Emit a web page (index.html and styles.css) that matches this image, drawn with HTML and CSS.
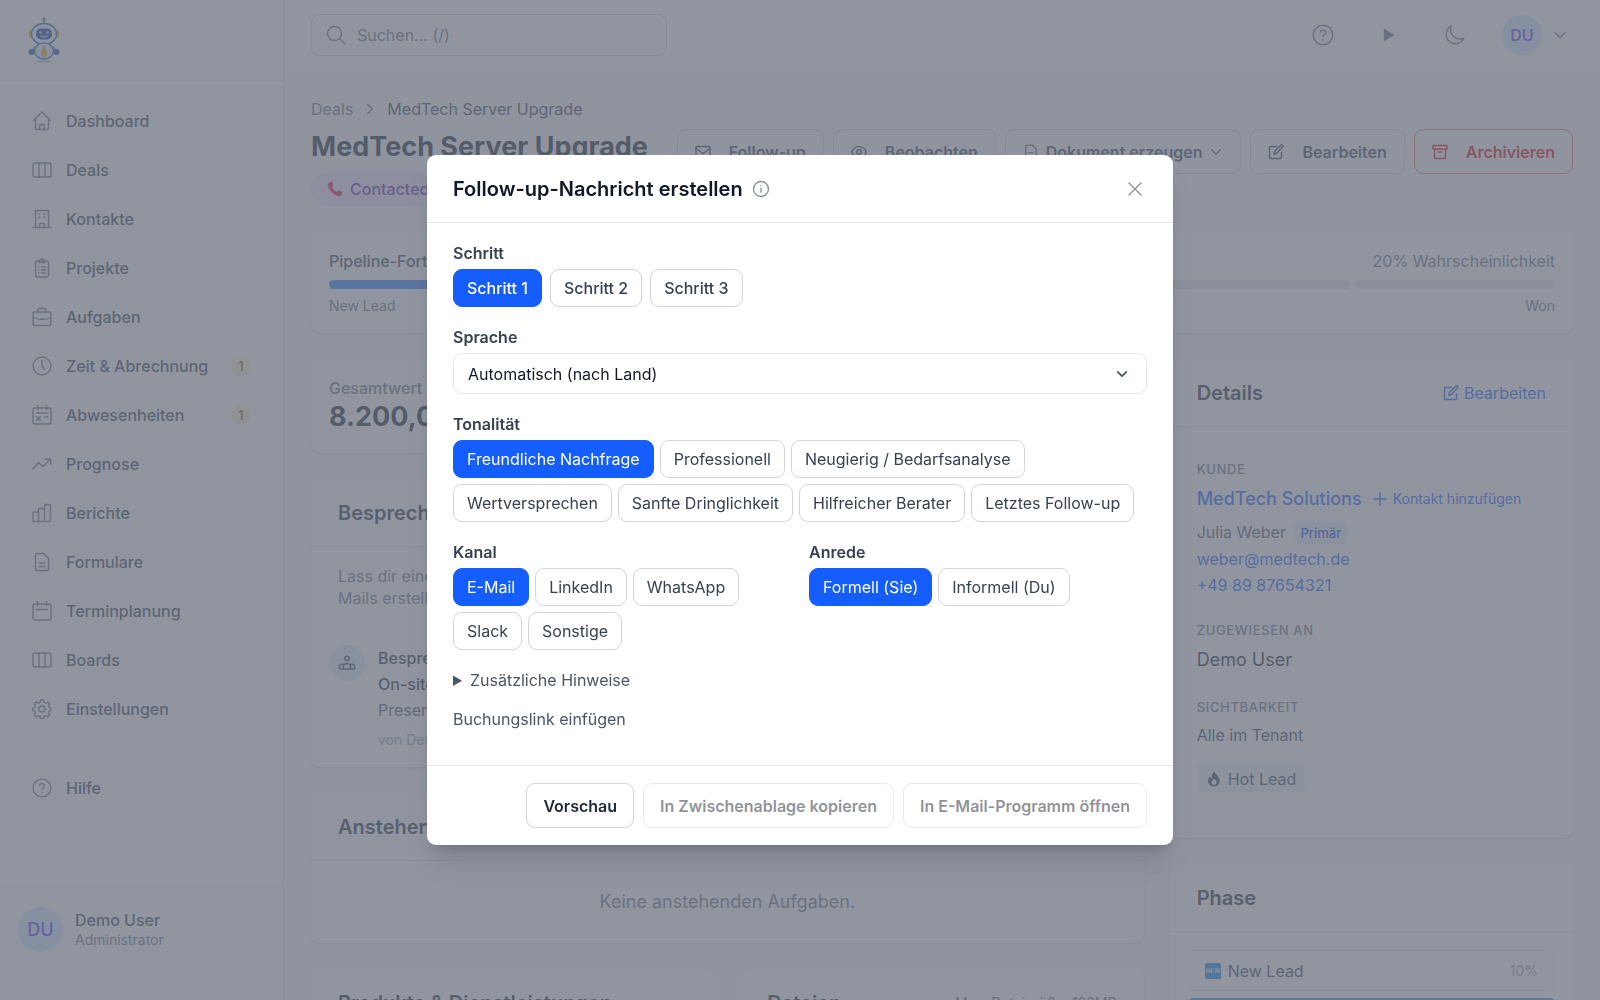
FILE: index.html
```html
<!DOCTYPE html>
<html lang="de">
<head>
  <meta charset="UTF-8">
  <meta name="viewport" content="width=device-width, initial-scale=1.0">
  <title>MedTech Server Upgrade</title>
  <link rel="stylesheet" href="styles.css">
</head>
<body>
  <!-- Icons -->
  <svg class="sprite" aria-hidden="true">
    <symbol id="i-home" viewBox="0 0 20 20"><path d="M1.5 9.5 10 1l8.500 8.500M3.500 8v9A1.500 1.500 0 0 0 5 18.500h10a1.500 1.500 0 0 0 1.500-1.500V8M7.700 18.500v-4a1 1 0 0 1 1-1h2.600a1 1 0 0 1 1 1v4"/></symbol>
    <symbol id="i-board" viewBox="0 0 20 20"><rect x="1" y="3" width="18" height="14" rx="2"/><path d="M7 3v14M13 3v14"/></symbol>
    <symbol id="i-building" viewBox="0 0 20 20"><path d="M1 18.500h18M3.500 18.500V1.500h13v17M7.700 18.500v-4h4.600v4M7 5h1M12 5h1M7 8.500h1M12 8.500h1"/></symbol>
    <symbol id="i-clipboard" viewBox="0 0 20 20"><rect x="3.500" y="3" width="13" height="16" rx="2"/><path d="M7 4.500V3a1 1 0 0 1 1-1h.6a1.500 1.500 0 0 1 2.800 0h.6a1 1 0 0 1 1 1v1.500zM6.500 9h.1M9.500 9h4M6.500 12h.1M9.500 12h4M6.500 15h.1M9.500 15h4"/></symbol>
    <symbol id="i-case" viewBox="0 0 20 20"><rect x="1" y="5" width="18" height="13.500" rx="2"/><path d="M6 5V3a1.500 1.500 0 0 1 1.500-1.500h5A1.500 1.500 0 0 1 14 3v2M1.500 10.500c5 2.700 12 2.700 17 0M10 11.500v1"/></symbol>
    <symbol id="i-clock" viewBox="0 0 20 20"><circle cx="10" cy="10" r="9"/><path d="M10 4.500V10l2.500 3.500"/></symbol>
    <symbol id="i-calx" viewBox="0 0 20 20"><rect x="1" y="3" width="18" height="16" rx="2"/><path d="M5.500.500v4M14.500.500v4M4.500 8h11M4.500 11.500l4 4M8.500 11.500l-4 4M12 12h3.500"/></symbol>
    <symbol id="i-trend" viewBox="0 0 20 20"><path d="M1 15l5.500-6.500 4.500 4L18.500 5M13 5h5.700v5.500"/></symbol>
    <symbol id="i-bars" viewBox="0 0 20 20"><path d="M1 18.500V10a1 1 0 0 1 1-1h4.500v9.500zM6.500 18.500V6.500a1 1 0 0 1 1-1h5v13zM12.500 18.500V3A1.500 1.500 0 0 1 14 1.500h3A1.500 1.500 0 0 1 18.500 3v14a1.500 1.500 0 0 1-1.500 1.500H2a1 1 0 0 1-1-1"/></symbol>
    <symbol id="i-doc" viewBox="0 0 20 20"><path d="M5 1.500h7l4.500 5V17a1.500 1.500 0 0 1-1.500 1.500H5A1.500 1.500 0 0 1 3.500 17V3A1.500 1.500 0 0 1 5 1.500zM7 11h6M7 14.500h6"/></symbol>
    <symbol id="i-cal" viewBox="0 0 20 20"><rect x="1" y="3" width="18" height="16" rx="2"/><path d="M5.500.500v4M14.500.500v4M4.500 8.500h11"/></symbol>
    <symbol id="i-gear" viewBox="0 0 20 20"><path d="M8.500 1h3l.6 2.400 1.500.7 2.200-1.200 1.900 2-1.200 2.200.6 1.500 2 .7v2l-2 .8-.6 1.500 1.200 2.200-2 2-2.200-1.200-1.500.7-.5 2h-3l-.6-2-1.500-.7-2.200 1.200-2-2 1.200-2.200-.7-1.500-2-.8v-2l2-.7.700-1.500-1.200-2.200 2-2 2.200 1.200 1.500-.7z"/><circle cx="10" cy="10" r="3"/></symbol>
    <symbol id="i-help" viewBox="0 0 22 22"><circle cx="11" cy="11" r="9.800"/><path d="M8.200 8.500c.3-3.300 5.500-3.200 5.600 0 0 2-2.800 2-2.800 4.300M11 15.700v.3"/></symbol>
    <symbol id="i-search" viewBox="0 0 20 20"><circle cx="8.500" cy="8.500" r="7"/><path d="M13.500 13.500l5.500 5.500"/></symbol>
    <symbol id="i-moon" viewBox="0 0 22 22"><path d="M7.500 2a9.300 9.300 0 1 0 12.300 12.500A9.500 9.500 0 0 1 7.500 2z"/></symbol>
    <symbol id="i-down" viewBox="0 0 16 16"><path d="M3 5.500l5 5 5-5"/></symbol>
    <symbol id="i-mail" viewBox="0 0 16 16"><rect x="1" y="2.500" width="14" height="11.500" rx="1"/><path d="M1 4.500l7 5 7-5"/></symbol>
    <symbol id="i-eye" viewBox="0 0 16 16"><path d="M.700 8C3.500.800 12.500.800 15.300 8 12.500 15.200 3.500 15.200.700 8z"/><circle cx="8" cy="8" r="2.300"/></symbol>
    <symbol id="i-edit" viewBox="0 0 16 16"><path d="M8.500 2.500h-6a1 1 0 0 0-1 1v10a1 1 0 0 0 1 1h10a1 1 0 0 0 1-1v-5M6 10.300l.5-2.700L12.800 1.300a1 1 0 0 1 1.600 0 1 1 0 0 1 0 1.800L8.500 9.500z"/></symbol>
    <symbol id="i-archive" viewBox="0 0 16 16"><path d="M1 1.500h14v3.500H1zM2.500 5v8.500a1 1 0 0 0 1 1h9a1 1 0 0 0 1-1V5M6.500 8h3"/></symbol>
    <symbol id="i-plus" viewBox="0 0 16 16"><path d="M8 2v12M2 8h12"/></symbol>
    <symbol id="i-close" viewBox="0 0 16 16"><path d="M2 2l12 12M14 2L2 14"/></symbol>
    <symbol id="i-info" viewBox="0 0 18 18"><circle cx="9" cy="9" r="7.500"/><path d="M9 8.200v4M9 5.600v.2"/></symbol>
    <symbol id="i-team" viewBox="0 0 18 18"><circle cx="9" cy="4.500" r="2.300"/><path d="M5.500 15v-2.500c0-4 7-4 7 0V15zM5.500 15h-3a1.500 1.500 0 0 1-1.500-1.500c0-2.500 2-3.700 4.500-3M12.500 15h3a1.500 1.500 0 0 0 1.500-1.500c0-2.500-2-3.700-4.500-3"/></symbol>
  </svg>

  <div class="app">
    <aside class="sidebar">
      <div class="brand">
        <svg class="logo" viewBox="0 0 32 46" role="img" aria-label="Logo">
          <path d="M16 2v6" stroke="#667" stroke-width="1.500"/><circle cx="16" cy="2" r="1.500" fill="#475569"/>
          <rect x="1" y="13" width="4" height="8" rx="2" fill="#d9b800"/><rect x="27" y="13" width="4" height="8" rx="2" fill="#d9b800"/>
          <ellipse cx="16" cy="17" rx="12.500" ry="10.500" fill="#f1f5f9" stroke="#2a66b8" stroke-width="1.500"/>
          <rect x="8" y="11.500" width="16" height="11" rx="5" fill="#123da0"/>
          <circle cx="12.500" cy="15.500" r="1.200" fill="#9fe0ff"/><circle cx="19.500" cy="15.500" r="1.200" fill="#9fe0ff"/>
          <path d="M13 19q3 2 6 0" stroke="#9fe0ff" fill="none"/>
          <path d="M7 30l-3 5M25 30l3 5" stroke="#64748b" stroke-width="2"/>
          <circle cx="3.500" cy="35" r="3" fill="#1d4e9a"/><circle cx="28.500" cy="35" r="3" fill="#1d4e9a"/>
          <ellipse cx="16" cy="34" rx="9.500" ry="8" fill="#e8f1fb" stroke="#2a66b8" stroke-width="1.500"/>
          <path d="M14.500 29h3l1.500 9-3 3-3-3z" fill="#f5a623"/>
          <ellipse cx="16" cy="44.500" rx="8" ry="1" fill="#3b82c4" opacity=".5"/>
        </svg>
      </div>
      <nav class="nav">
        <a href="#"><svg class="icon"><use href="#i-home"/></svg>Dashboard</a>
        <a href="#"><svg class="icon"><use href="#i-board"/></svg>Deals</a>
        <a href="#"><svg class="icon"><use href="#i-building"/></svg>Kontakte</a>
        <a href="#"><svg class="icon"><use href="#i-clipboard"/></svg>Projekte</a>
        <a href="#"><svg class="icon"><use href="#i-case"/></svg>Aufgaben</a>
        <a href="#"><svg class="icon"><use href="#i-clock"/></svg>Zeit &amp; Abrechnung<span class="count">1</span></a>
        <a href="#"><svg class="icon"><use href="#i-calx"/></svg>Abwesenheiten<span class="count">1</span></a>
        <a href="#"><svg class="icon"><use href="#i-trend"/></svg>Prognose</a>
        <a href="#"><svg class="icon"><use href="#i-bars"/></svg>Berichte</a>
        <a href="#"><svg class="icon"><use href="#i-doc"/></svg>Formulare</a>
        <a href="#"><svg class="icon"><use href="#i-cal"/></svg>Terminplanung</a>
        <a href="#"><svg class="icon"><use href="#i-board"/></svg>Boards</a>
        <a href="#"><svg class="icon"><use href="#i-gear"/></svg>Einstellungen</a>
        <hr>
        <a href="#"><svg class="icon"><use href="#i-help"/></svg>Hilfe</a>
      </nav>
      <div class="profile">
        <span class="avatar avatar-lg">DU</span>
        <div>
          <div class="profile-name">Demo User</div>
          <div class="profile-role">Administrator</div>
        </div>
      </div>
    </aside>

    <div class="page">
      <header class="topbar">
        <label class="search">
          <svg class="icon"><use href="#i-search"/></svg>
          <input type="search" placeholder="Suchen... (/)" aria-label="Suchen">
        </label>
        <div class="top-actions">
          <button class="icon-btn" aria-label="Hilfe"><svg class="icon"><use href="#i-help"/></svg></button>
          <button class="icon-btn" aria-label="Timer starten"><svg class="icon" viewBox="0 0 22 22"><path class="solid" d="M6.500 5.500v11l9-5.500z"/></svg></button>
          <button class="icon-btn" aria-label="Dunkelmodus"><svg class="icon"><use href="#i-moon"/></svg></button>
          <button class="user-menu" aria-label="Benutzermenü"><span class="avatar">DU</span><svg class="icon-sm"><use href="#i-down"/></svg></button>
        </div>
      </header>

      <main class="main">
        <nav class="breadcrumb">
          <a href="#">Deals</a>
          <svg class="crumb-sep" viewBox="0 0 16 16"><path d="M6 4l4 4-4 4"/></svg>
          <span>MedTech Server Upgrade</span>
        </nav>

        <div class="deal-head">
          <div>
            <h1>MedTech Server Upgrade</h1>
            <span class="stage">
              <svg class="emoji" viewBox="0 0 16 16"><path fill="#e11d48" d="M2 1.500 4.500.500c.5 0 .8.3 1 .8L6.500 4c.1.500 0 .8-.4 1.100L5 6c.8 2 2.600 3.800 4.800 4.800l1-1.200c.3-.4.7-.4 1.200-.2l2.700 1.200c.5.300.7.700.6 1.200L14.500 14c-.4 1-1.500 1.500-3 1.200C6 14 1.500 8.500.800 4.500.600 3 1 2 2 1.500z"/></svg>
              Contacted
            </span>
          </div>
          <div class="deal-actions">
            <button class="btn"><svg class="icon-sm"><use href="#i-mail"/></svg>Follow-up</button>
            <button class="btn"><svg class="icon-sm"><use href="#i-eye"/></svg>Beobachten</button>
            <button class="btn btn-drop"><svg class="icon-sm"><use href="#i-doc"/></svg>Dokument erzeugen<svg class="icon-xs"><use href="#i-down"/></svg></button>
            <button class="btn"><svg class="icon-sm"><use href="#i-edit"/></svg>Bearbeiten</button>
            <button class="btn btn-danger"><svg class="icon-sm"><use href="#i-archive"/></svg>Archivieren</button>
          </div>
        </div>

        <section class="card pipeline">
          <div class="between pipeline-top"><strong>Pipeline-Fortschritt</strong><span>20% Wahrscheinlichkeit</span></div>
          <div class="segments"><i class="done"></i><i class="done"></i><i></i><i></i><i></i><i></i></div>
          <div class="between small"><span>New Lead</span><span>Won</span></div>
        </section>

        <div class="columns">
          <div class="col-main">
            <section class="stats">
              <div class="card stat">
                <div class="stat-label">Gesamtwert</div>
                <div class="stat-value">8.200,00 €</div>
              </div>
            </section>

            <section class="card">
              <div class="card-head"><h2>Besprechungen</h2></div>
              <p class="hint">Lass dir eine Vorbereitung oder Follow-up-<br>Mails erstellen.</p>
              <div class="entry">
                <span class="entry-icon"><svg class="icon-md"><use href="#i-team"/></svg></span>
                <div>
                  <div class="entry-title">Besprechung</div>
                  <div class="entry-title">On-site Termin</div>
                  <div class="entry-text">Presentation</div>
                  <div class="entry-meta">von Demo User</div>
                </div>
              </div>
            </section>

            <section class="card">
              <div class="card-head"><h2>Anstehende Aufgaben</h2></div>
              <p class="empty">Keine anstehenden Aufgaben.</p>
            </section>

            <div class="pair">
              <section class="card"><div class="card-head"><h2>Produkte &amp; Dienstleistungen</h2></div></section>
              <section class="card"><div class="card-head"><h2>Dateien</h2><span class="small">Max. Dateigröße: 128MB</span></div></section>
            </div>
          </div>

          <div class="col-side">
            <section class="card">
              <div class="card-head"><h2>Details</h2><a class="edit-link" href="#"><svg class="icon-sm"><use href="#i-edit"/></svg>Bearbeiten</a></div>
              <div class="details">
                <div class="detail">
                  <h3>Kunde</h3>
                  <div class="customer">
                    <a class="company" href="#">MedTech Solutions</a>
                    <a class="add-contact" href="#"><svg class="icon-sm"><use href="#i-plus"/></svg>Kontakt hinzufügen</a>
                  </div>
                  <div class="contact">
                    <span>Julia Weber <span class="primary-tag">Primär</span></span>
                    <a href="#">weber@medtech.de</a>
                    <a href="#">+49 89 87654321</a>
                  </div>
                </div>
                <div class="detail">
                  <h3>Zugewiesen an</h3>
                  <div class="detail-value">Demo User</div>
                </div>
                <div class="detail">
                  <h3>Sichtbarkeit</h3>
                  <div class="visibility">Alle im Tenant</div>
                  <span class="hot">
                    <svg class="flame" viewBox="0 0 16 16"><path d="M8.500.500c.5 2.700 4.800 4.500 5.200 8.700.3 3.700-2.400 6.300-5.700 6.300S1.700 13 2 9.300c.2-1.900 1.200-3.200 2.300-4.300 0 1.500.4 2.300 1.300 2.700C5.500 4.500 6.500 2 8.500.500zM8 14c1.600 0 2.700-1.100 2.600-2.700-.1-1.500-1.300-2.200-1.800-3.600C7.400 8.700 5.300 9.700 5.400 11.600 5.500 13 6.600 14 8 14z"/></svg>
                    Hot Lead
                  </span>
                </div>
              </div>
            </section>

            <section class="card">
              <div class="card-head"><h2>Phase</h2></div>
              <div class="phases">
                <button class="phase">
                  <svg class="emoji" viewBox="0 0 16 16" aria-hidden="true"><rect width="16" height="16" rx="2" fill="#0a84e6"/><text class="emoji-text" x="8" y="10" text-anchor="middle">NEW</text></svg>
                  New Lead<span class="percent">10%</span>
                </button>
                <button class="phase current">Contacted<span class="percent">20%</span></button>
              </div>
            </section>
          </div>
        </div>
      </main>
    </div>
  </div>

  <!-- Modal Follow-up -->
  <div class="overlay">
    <div class="modal" role="dialog" aria-modal="true" aria-labelledby="modal-title">
      <div class="modal-head">
        <h2 id="modal-title">Follow-up-Nachricht erstellen</h2>
        <svg class="icon-md"><use href="#i-info"/></svg>
        <button class="close" aria-label="Schließen"><svg class="icon-sm"><use href="#i-close"/></svg></button>
      </div>
      <form class="modal-body">
        <div class="field">
          <div class="field-label">Schritt</div>
          <div class="pills pills-steps">
            <button type="button" class="pill active">Schritt 1</button>
            <button type="button" class="pill">Schritt 2</button>
            <button type="button" class="pill">Schritt 3</button>
          </div>
        </div>
        <div class="field">
          <label class="field-label" for="sprache">Sprache</label>
          <div class="select-wrap">
            <select id="sprache"><option>Automatisch (nach Land)</option><option>Deutsch</option><option>Englisch</option></select>
            <svg class="icon-sm"><use href="#i-down"/></svg>
          </div>
        </div>
        <div class="field">
          <div class="field-label">Tonalität</div>
          <div class="pills">
            <button type="button" class="pill active">Freundliche Nachfrage</button>
            <button type="button" class="pill">Professionell</button>
            <button type="button" class="pill">Neugierig / Bedarfsanalyse</button>
            <button type="button" class="pill">Wertversprechen</button>
            <button type="button" class="pill">Sanfte Dringlichkeit</button>
            <button type="button" class="pill">Hilfreicher Berater</button>
            <button type="button" class="pill">Letztes Follow-up</button>
          </div>
        </div>
        <div class="field-row">
          <div class="field">
            <div class="field-label">Kanal</div>
            <div class="pills">
              <button type="button" class="pill active">E-Mail</button>
              <button type="button" class="pill">LinkedIn</button>
              <button type="button" class="pill">WhatsApp</button>
              <button type="button" class="pill">Slack</button>
              <button type="button" class="pill">Sonstige</button>
            </div>
          </div>
          <div class="field">
            <div class="field-label">Anrede</div>
            <div class="pills">
              <button type="button" class="pill active">Formell (Sie)</button>
              <button type="button" class="pill">Informell (Du)</button>
            </div>
          </div>
        </div>
        <div class="extras">
          <details>
            <summary>Zusätzliche Hinweise</summary>
            <textarea aria-label="Zusätzliche Hinweise"></textarea>
          </details>
          <button type="button" class="text-btn">Buchungslink einfügen</button>
        </div>
      </form>
      <div class="modal-foot">
        <button class="btn btn-solid">Vorschau</button>
        <button class="btn btn-solid" disabled>In Zwischenablage kopieren</button>
        <button class="btn btn-solid" disabled>In E-Mail-Programm öffnen</button>
      </div>
    </div>
  </div>
</body>
</html>
```
FILE: styles.css
```css
* {
  margin: 0;
  padding: 0;
  box-sizing: border-box;
}

body {
  font-family: Inter, "Liberation Sans", sans-serif;
  font-size: 16px;
  line-height: 22px;
  color: #374151;
  background-color: #f9fafb;
  height: 100vh;
  overflow: hidden;
}

a {
  color: inherit;
  text-decoration: none;
}

button,
input,
select {
  font: inherit;
  color: inherit;
  background: none;
  border: none;
}

button {
  cursor: pointer;
}

.sprite {
  display: none;
}

svg {
  flex-shrink: 0;
  fill: none;
  stroke: currentColor;
  stroke-width: 1.4;
  stroke-linecap: round;
  stroke-linejoin: round;
}

.logo,
.emoji {
  stroke: none;
}

.icon { width: 20px; height: 20px; }
.icon-md { width: 18px; height: 18px; }
.icon-sm { width: 16px; height: 16px; }
.icon-xs { width: 14px; height: 14px; }
.emoji { width: 16px; height: 16px; }

.emoji-text {
  font-size: 6px;
  font-weight: 700;
  fill: #cfe6ff;
}

.app {
  display: flex;
  height: 100vh;
}

/* Sidebar */
.sidebar {
  width: 284px;
  flex-shrink: 0;
  display: flex;
  flex-direction: column;
  background-color: #fff;
  border-right: 1px solid #e5e7eb;
}

.brand {
  height: 81px;
  padding: 17px 28px;
  border-bottom: 1px solid #e5e7eb;
}

.logo {
  width: 32px;
  height: 46px;
}

.nav {
  flex: 1;
  display: flex;
  flex-direction: column;
  gap: 5px;
  padding: 18px;
}

.nav a {
  display: flex;
  align-items: center;
  gap: 14px;
  height: 44px;
  padding: 0 14px;
  font-weight: 500;
}

.nav .icon {
  color: #6b7280;
}

.nav hr {
  border: none;
  border-top: 1px solid #f3f4f6;
  margin: 12px 0;
}

.count {
  margin-left: auto;
  width: 20px;
  border-radius: 10px;
  font-size: 13px;
  line-height: 20px;
  text-align: center;
  color: #854d0e;
  background-color: #fbfac8;
}

.profile {
  display: flex;
  align-items: center;
  gap: 12px;
  height: 114px;
  padding: 0 18px 28px;
  border-top: 1px solid #f3f4f6;
}

.avatar {
  width: 40px;
  height: 40px;
  border-radius: 50%;
  line-height: 40px;
  text-align: center;
  font-weight: 500;
  color: #4f39f6;
  background-color: #dbeafe;
}

.avatar-lg {
  width: 45px;
  height: 45px;
  line-height: 45px;
  font-size: 18px;
}

.profile-name {
  font-weight: 500;
  line-height: 20px;
}

.profile-role {
  font-size: 14px;
  line-height: 20px;
  color: #6b7280;
}

/* Topbar */
.page {
  flex: 1;
  min-width: 0;
  display: flex;
  flex-direction: column;
}

.topbar {
  display: flex;
  align-items: center;
  justify-content: space-between;
  height: 71px;
  flex-shrink: 0;
  padding: 0 32px 0 27px;
  background-color: #fff;
  border-bottom: 1px solid #f3f4f6;
}

.search {
  display: flex;
  align-items: center;
  gap: 11px;
  width: 356px;
  height: 42px;
  padding: 0 14px;
  border: 1px solid #d1d5db;
  border-radius: 9px;
  color: #6b7280;
}

.search input {
  flex: 1;
  min-width: 0;
  outline: none;
}

.search input::placeholder {
  color: #6b7280;
}

.top-actions {
  display: flex;
  align-items: center;
  gap: 44px;
  color: #6b7280;
}

.icon-btn {
  display: flex;
}

.icon-btn .icon {
  width: 22px;
  height: 22px;
}

.solid {
  fill: currentColor;
}

.user-menu {
  display: flex;
  align-items: center;
  gap: 10px;
  margin-left: -8px;
}

/* Deal */
.main {
  flex: 1;
  min-height: 0;
  overflow: hidden;
  padding: 27px 27px 0;
}

.breadcrumb {
  display: flex;
  align-items: center;
  gap: 8px;
  color: #6b7280;
  margin-bottom: 9px;
}

.breadcrumb span {
  color: #374151;
}

.crumb-sep {
  width: 18px;
  height: 18px;
}

.deal-head {
  display: flex;
  justify-content: space-between;
  align-items: flex-start;
  margin-bottom: 26px;
}

h1 {
  font-size: 27px;
  line-height: 36px;
  font-weight: 700;
  color: #111827;
}

.stage {
  display: inline-flex;
  align-items: center;
  gap: 7px;
  height: 34px;
  margin-top: 7px;
  padding: 0 16px;
  border-radius: 17px;
  font-weight: 500;
  color: #6b21a8;
  background-color: #f3e8ff;
}

.deal-actions {
  display: flex;
  gap: 9px;
}

.btn {
  display: flex;
  align-items: center;
  gap: 18px;
  height: 45px;
  padding: 0 17px;
  border: 1px solid #d1d5db;
  border-radius: 9px;
  font-weight: 600;
  white-space: nowrap;
}

.btn-drop {
  gap: 7px;
}

.btn-danger {
  color: #e7000b;
  border-color: #fb6470;
}

.card {
  background-color: #fff;
  border-radius: 9px;
  box-shadow: 0 1px 2px rgba(0, 0, 0, 0.12);
}

.between {
  display: flex;
  justify-content: space-between;
}

.small {
  font-size: 14px;
  line-height: 18px;
  color: #6b7280;
}

.pipeline {
  padding: 18px;
  margin-bottom: 26px;
  color: #6b7280;
}

.pipeline-top strong {
  font-weight: 500;
  color: #374151;
}

.segments {
  display: flex;
  gap: 5px;
  margin: 8px 0;
}

.segments i {
  flex: 1;
  height: 9px;
  border-radius: 5px;
  background-color: #e5e7eb;
}

.segments .done {
  background-color: #2b7fff;
}

.columns {
  display: grid;
  grid-template-columns: repeat(3, 1fr);
  gap: 26px;
}

.col-main {
  grid-column: span 2;
}

.col-main,
.col-side {
  display: flex;
  flex-direction: column;
  gap: 26px;
  min-width: 0;
}

.stats,
.pair {
  display: grid;
  grid-template-columns: 1fr 1fr;
  gap: 26px;
}

.stat {
  padding: 18px;
}

.stat-label {
  color: #6b7280;
  font-weight: 500;
}

.stat-value {
  font-size: 27px;
  line-height: 36px;
  font-weight: 700;
  color: #111827;
}

.card-head {
  display: flex;
  align-items: center;
  justify-content: space-between;
  height: 68px;
  padding: 0 27px;
  border-bottom: 1px solid #e5e7eb;
}

.card-head h2 {
  font-size: 20px;
  font-weight: 600;
  color: #1f2937;
  white-space: nowrap;
}

.hint {
  padding: 18px 27px;
  color: #6b7280;
}

.entry {
  display: flex;
  gap: 13px;
  padding: 18px 18px 17px;
}

.entry-icon {
  display: flex;
  align-items: center;
  justify-content: center;
  width: 36px;
  height: 36px;
  border-radius: 50%;
  background-color: #e3eefb;
}

.entry-title {
  line-height: 26px;
  font-weight: 500;
  color: #1f2937;
}

.entry-text {
  line-height: 26px;
  color: #4b5563;
}

.entry-meta {
  margin-top: 7px;
  font-size: 14px;
  line-height: 20px;
  color: #9ca3af;
}

.empty {
  padding: 28px;
  font-size: 18px;
  line-height: 26px;
  text-align: center;
  color: #6b7280;
}

/* Details */
.edit-link {
  display: flex;
  align-items: center;
  gap: 5px;
  color: #155dfc;
}

.details {
  display: flex;
  flex-direction: column;
  gap: 25px;
  padding: 33px 27px 44px;
}

h3 {
  font-size: 13px;
  line-height: 18px;
  font-weight: 500;
  letter-spacing: 0.05em;
  text-transform: uppercase;
  color: #6b7280;
  margin-bottom: 8px;
}

.customer {
  display: flex;
  align-items: center;
  gap: 10px;
  margin-bottom: 9px;
  color: #155dfc;
}

.company {
  font-size: 18px;
  line-height: 26px;
  font-weight: 500;
}

.add-contact {
  display: flex;
  align-items: center;
  gap: 5px;
  font-size: 14px;
}

.contact {
  display: flex;
  flex-direction: column;
  align-items: flex-start;
  gap: 4px;
  color: #4b5563;
}

.contact a {
  color: #155dfc;
}

.primary-tag {
  margin-left: 4px;
  padding: 3px 6px;
  border-radius: 4px;
  font-size: 13px;
  font-weight: 500;
  color: #1447e6;
  background-color: #e8f1fd;
}

.detail-value {
  font-size: 18px;
  line-height: 26px;
  color: #111827;
}

.hot {
  display: inline-flex;
  align-items: center;
  gap: 6px;
  height: 30px;
  margin-top: 18px;
  padding: 0 9px;
  border-radius: 5px;
  background-color: #f0f3f8;
}

.flame {
  width: 16px;
  height: 16px;
  fill: currentColor;
  stroke: none;
}

.phases {
  display: flex;
  flex-direction: column;
  gap: 7px;
  padding: 18px;
}

.phase {
  display: flex;
  align-items: center;
  gap: 7px;
  height: 41px;
  padding: 0 16px;
  border: 1px solid #eceef1;
  border-radius: 5px;
}

.phase.current {
  border: 2px solid #2b9fff;
  background-color: #dbeafe;
}

.percent {
  margin-left: auto;
  font-size: 14px;
  color: #9ca3af;
}

/* Modal */
.overlay {
  position: fixed;
  inset: 0;
  display: flex;
  align-items: center;
  justify-content: center;
  padding: 18px;
  background-color: rgba(107, 114, 128, 0.75);
}

.modal {
  width: 100%;
  max-width: 746px;
  border-radius: 9px;
  background-color: #fff;
  box-shadow: 0 22px 28px -6px rgba(0, 0, 0, 0.12), 0 8px 12px -6px rgba(0, 0, 0, 0.16);
}

.modal-head {
  display: flex;
  align-items: center;
  gap: 9px;
  height: 68px;
  padding: 0 28px 0 26px;
  border-bottom: 1px solid #e5e7eb;
  color: #8b909b;
}

.modal-head h2 {
  font-size: 20px;
  font-weight: 600;
  color: #111827;
}

.close {
  display: flex;
  margin-left: auto;
  padding: 2px;
}

.modal-body {
  display: flex;
  flex-direction: column;
  gap: 19px;
  padding: 19px 26px 35px;
}

.field-label {
  display: block;
  margin-bottom: 5px;
  font-weight: 600;
}

.field-row {
  display: grid;
  grid-template-columns: 1fr 1fr;
  gap: 18px;
}

.pills {
  display: flex;
  flex-wrap: wrap;
  gap: 6px;
}

.pills-steps {
  gap: 8px;
}

.pills-steps .pill {
  font-weight: 500;
}

.pill {
  height: 38px;
  padding: 0 13px;
  border: 1px solid #d1d5db;
  border-radius: 9px;
  background-color: #fff;
  white-space: nowrap;
}

.pill.active {
  color: #fff;
  border-color: #155dfc;
  background-color: #155dfc;
}

.select-wrap {
  display: grid;
  align-items: center;
}

.select-wrap select,
.select-wrap svg {
  grid-area: 1 / 1;
}

.select-wrap select {
  appearance: none;
  width: 100%;
  height: 41px;
  padding: 0 14px;
  border: 1px solid #e5e7eb;
  border-radius: 9px;
  color: #111827;
}

.select-wrap svg {
  width: 14px;
  height: 14px;
  justify-self: end;
  margin-right: 18px;
  color: #4b5563;
  stroke-width: 2;
  pointer-events: none;
}

.extras {
  display: flex;
  flex-direction: column;
  align-items: flex-start;
  gap: 17px;
  color: #4b5563;
}

summary {
  cursor: pointer;
}

.modal-foot {
  display: flex;
  justify-content: flex-end;
  gap: 9px;
  padding: 17px 26px;
  border-top: 1px solid #e5e7eb;
}

.modal-foot .btn {
  padding: 0 16px;
}

.btn-solid {
  color: #1f2937;
  background-color: #fff;
}

.btn-solid:disabled {
  opacity: 0.5;
  cursor: default;
}
```
